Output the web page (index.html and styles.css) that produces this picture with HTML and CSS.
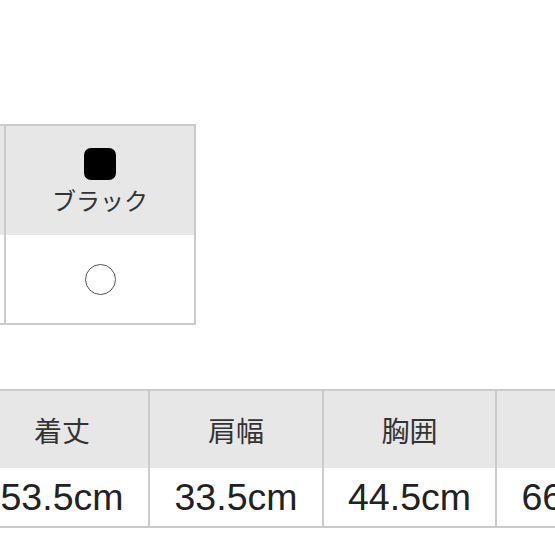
FILE: index.html
```html
<!DOCTYPE html>
<html lang="ja">
<head>
<meta charset="utf-8">
<link rel="stylesheet" href="styles.css">
</head>
<body>
<div class="page">
  <div class="color-table">
    <div class="cell head"></div>
    <div class="cell head swatch-cell">
      <span class="swatch"></span>
      <span class="label">ブラック</span>
    </div>
    <div class="cell body"></div>
    <div class="cell body stock-cell"><span class="stock"></span></div>
  </div>
  <div class="size-table">
    <div class="cell head th">着丈</div>
    <div class="cell head th">肩幅</div>
    <div class="cell head th">胸囲</div>
    <div class="cell head th">袖丈</div>
    <div class="cell body td">53.5cm</div>
    <div class="cell body td">33.5cm</div>
    <div class="cell body td">44.5cm</div>
    <div class="cell body td">66.5cm</div>
  </div>
</div>
</body>
</html>
```
FILE: styles.css
```css
body {
  margin: 0;
  overflow: hidden;
  background: #fff;
  color: #333;
  font-family: "Liberation Sans", "Noto Sans CJK JP", sans-serif;
}
.page {
  padding-top: 124px;
  display: flex;
  flex-direction: column;
  align-items: flex-start;
}
.color-table {
  display: grid;
  grid-template-columns: 150px 188px;
  grid-template-rows: 109px 88px;
  column-gap: 2px;
  padding: 2px;
  background: #cbcbcb;
  margin-left: -148px;
}
.cell.head { background: #e7e7e7; }
.cell.body { background: #fff; }
.swatch-cell {
  display: flex;
  flex-direction: column;
  align-items: center;
  justify-content: center;
}
.swatch {
  width: 32px;
  height: 32px;
  border-radius: 7px;
  background: #000;
}
.label {
  font-family: "Noto Sans CJK JP", sans-serif;
  font-size: 24px;
  line-height: 28px;
  margin-top: 6px;
  color: #333;
}
.stock-cell {
  display: flex;
  align-items: center;
  justify-content: center;
}
.stock {
  width: 29px;
  height: 29px;
  border: 1.5px solid #555;
  border-radius: 50%;
}
.size-table {
  display: grid;
  grid-template-columns: 172px 172px 171px 172px;
  grid-template-rows: 77px 58px;
  column-gap: 2px;
  padding: 2px;
  background: #cbcbcb;
  margin-top: 64px;
  margin-left: -26px;
}
.th {
  display: flex;
  align-items: center;
  justify-content: center;
  font-family: "Noto Sans CJK JP", sans-serif;
  font-size: 28px;
  color: #333;
}
.td {
  display: flex;
  align-items: center;
  justify-content: center;
  font-size: 37.5px;
  color: #222;
}
```
